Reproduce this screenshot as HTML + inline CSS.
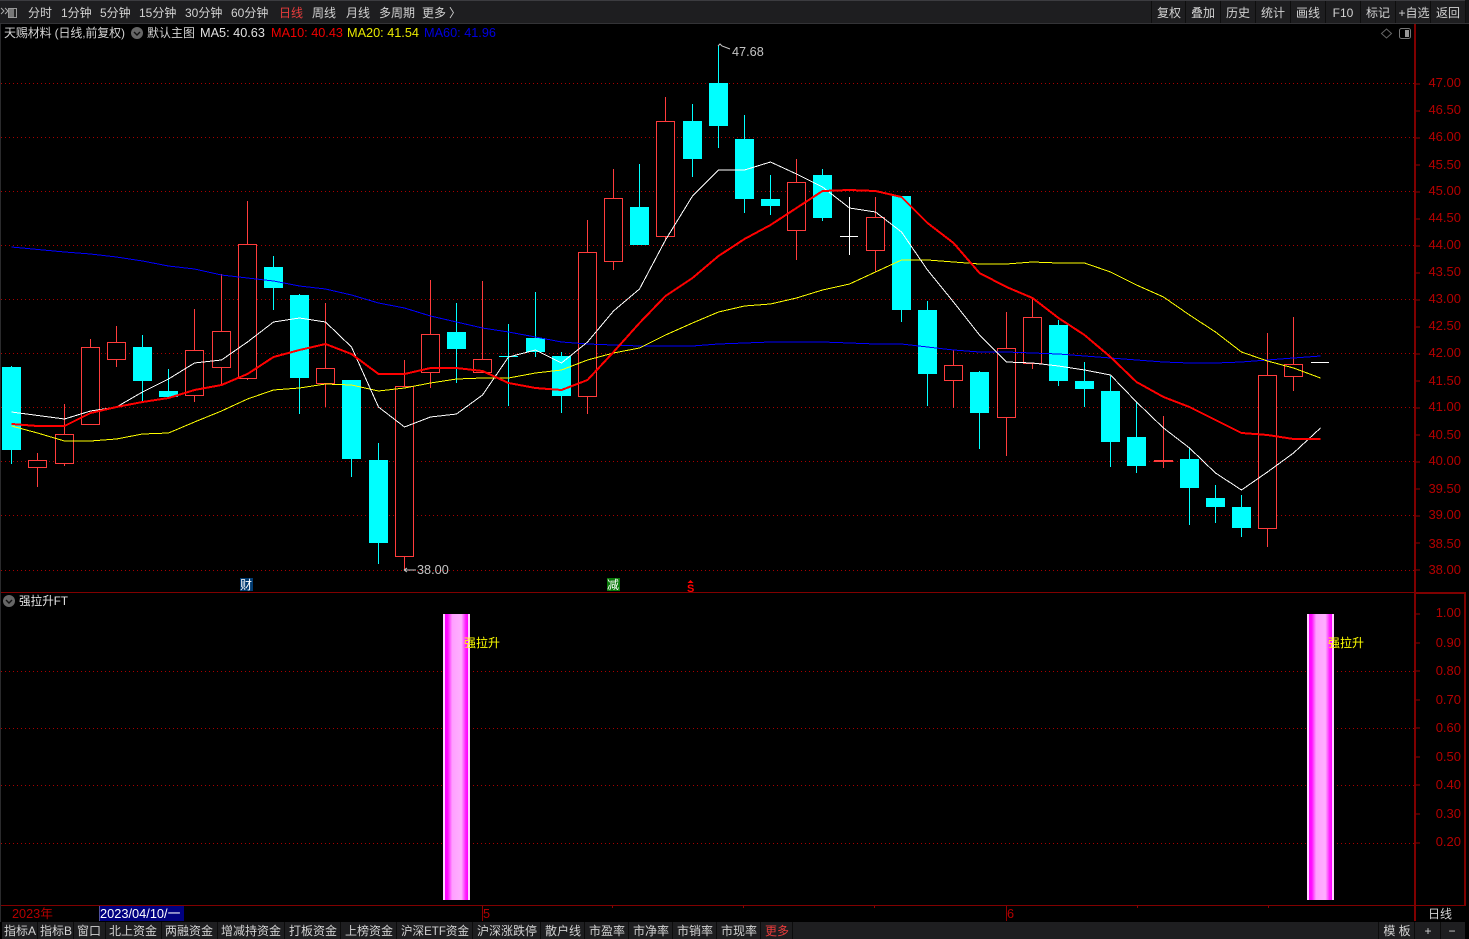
<!DOCTYPE html>
<html><head><meta charset="utf-8"><style>
html,body{margin:0;padding:0;background:#000;overflow:hidden}
svg{display:block;position:absolute;left:0;top:0}
text{font-family:"Liberation Sans","Noto Sans CJK SC",sans-serif;font-size:12px;fill:#d2d2d2}
.n{font-size:12.7px}
.p text{font-size:13px;fill:#b40000;text-anchor:end}
.t text{text-anchor:middle}
</style></head><body>
<svg width="1469" height="939" viewBox="0 0 1469 939">
<rect width="1469" height="939" fill="#000"/>
<!-- toolbar -->
<rect x="0" y="0" width="1469" height="23" fill="#1e1e20"/>
<rect x="0" y="0" width="1469" height="1" fill="#3c3c40"/>
<rect x="0" y="23" width="1469" height="1" fill="#333336"/>
<rect x="0" y="24" width="1" height="898" fill="#2a2a2c"/>
<rect x="1465" y="0" width="4" height="23" fill="#141416"/>
<path d="M1151.5 1V23M1185.5 1V23M1220.5 1V23M1255.5 1V23M1290.5 1V23M1325.5 1V23M1360.5 1V23M1395.5 1V23M1430.5 1V23M1465.5 1V23" stroke="#0e0e0e" fill="none" shape-rendering="crispEdges"/>
<path d="M1 8l3 3-3 3M5 8l3 3-3 3" stroke="#aaa" fill="none"/>
<rect x="8.5" y="8.5" width="8" height="9" fill="#222" stroke="#999"/>
<rect x="9" y="9" width="5" height="8" fill="#777"/>
<text x="28" y="17">分时</text>
<text x="61" y="17">1分钟</text>
<text x="100" y="17">5分钟</text>
<text x="139" y="17">15分钟</text>
<text x="185" y="17">30分钟</text>
<text x="231" y="17">60分钟</text>
<text x="279" y="17" style="fill:#e83c3c">日线</text>
<text x="312" y="17">周线</text>
<text x="346" y="17">月线</text>
<text x="379" y="17">多周期</text>
<text x="422" y="17">更多</text>
<text x="449" y="17">〉</text>
<g class="t">
<text x="1169" y="17">复权</text><text x="1203" y="17">叠加</text><text x="1238" y="17">历史</text><text x="1273" y="17">统计</text><text x="1308" y="17">画线</text><text x="1343" y="17">F10</text><text x="1378" y="17">标记</text><text x="1414" y="17">+自选</text><text x="1448" y="17">返回</text>
</g>
<!-- info row -->
<text x="4" y="37" textLength="121" lengthAdjust="spacing">天赐材料 (日线,前复权)</text>
<circle cx="137" cy="33" r="6" fill="#666"/>
<path d="M134 32l3 3 3-3" stroke="#111" stroke-width="1.4" fill="none"/>
<text x="147" y="37">默认主图</text>
<text class="n" x="200" y="37" style="fill:#e0e0e0">MA5: 40.63</text>
<text class="n" x="271" y="37" style="fill:#f00000">MA10: 40.43</text>
<text class="n" x="347" y="37" style="fill:#e8e800">MA20: 41.54</text>
<text class="n" x="424" y="37" style="fill:#0000e0">MA60: 41.96</text>
<path d="M1386.5 29l5 4.5-5 4.5-5-4.5z" fill="none" stroke="#666"/>
<rect x="1399.5" y="28.5" width="11" height="10" rx="2" fill="none" stroke="#777"/>
<rect x="1405" y="30" width="4" height="7" fill="#999"/>
<!-- grid -->
<path shape-rendering="crispEdges" d="M1 83.5H1415M1 137.5H1415M1 191.5H1415M1 245.5H1415M1 299.5H1415M1 353.5H1415M1 407.5H1415M1 461.5H1415M1 515.5H1415M1 570.5H1415M1 671.5H1415M1 728.5H1415M1 785.5H1415M1 843.5H1415" stroke="#a80000" stroke-dasharray="1 3" fill="none"/>
<!-- candles -->
<g shape-rendering="crispEdges">
<path stroke="#00ffff" fill="none" d="M11.5 366V464M142.5 335V401M168.5 369V392M273.5 256V310M299.5 294V414M351.5 380V477M378.5 443V564M456.5 303V383M508.5 324V406M499 356.5H518M535.5 292V357M561.5 352V413M639.5 164V207M692.5 104V177M718.5 46V148M744.5 115V213M770.5 175V215M822.5 169V221M901.5 196V322M927.5 301V406M979.5 371V449M1058.5 320V386M1084.5 362V407M1110.5 376V467M1136.5 402V473M1189.5 448V525M1215.5 485V523M1241.5 495V537"/>
<path fill="#00ffff" d="M2 367h19v83H2zM133 347h19v34H133zM159 391h19v6H159zM264 267h19v21H264zM290 295h19v83H290zM342 380h19v79H342zM369 460h19v83H369zM447 332h19v17H447zM526 338h19v14H526zM552 356h19v40H552zM630 207h19v38H630zM683 121h19v38H683zM709 83h19v43H709zM735 139h19v60H735zM761 199h19v7H761zM813 175h19v43H813zM892 196h19v114H892zM918 310h19v64H918zM970 372h19v41H970zM1049 325h19v56H1049zM1075 381h19v8H1075zM1101 391h19v51H1101zM1127 437h19v29H1127zM1180 459h19v29H1180zM1206 498h19v9H1206zM1232 507h19v21H1232z"/>
<path stroke="#ff3c3c" fill="none" d="M37.5 453V487M64.5 404V466M90.5 339V347M116.5 326V367M194.5 309V402M221.5 274V385M247.5 201V380M325.5 303V407M404.5 360V570M430.5 280V388M482.5 281V359M587.5 220V414M613.5 169V270M665.5 97V241M796.5 159V260M875.5 197V272M953.5 350V408M1006.5 312V456M1032.5 298V369M1163.5 416V468M1267.5 333V547M1293.5 317V391"/>
<rect x="1154" y="460" width="19" height="2" fill="#ff3c3c"/>
<g fill="#000" stroke="#ff3c3c">
<rect x="28.5" y="460.5" width="18" height="7"/><rect x="55.5" y="434.5" width="18" height="29"/><rect x="81.5" y="347.5" width="18" height="77"/><rect x="107.5" y="342.5" width="18" height="17"/><rect x="185.5" y="350.5" width="18" height="45"/><rect x="212.5" y="331.5" width="18" height="36"/><rect x="238.5" y="244.5" width="18" height="134"/><rect x="316.5" y="368.5" width="18" height="15"/><rect x="395.5" y="386.5" width="18" height="170"/><rect x="421.5" y="334.5" width="18" height="38"/><rect x="473.5" y="359.5" width="18" height="13"/><rect x="578.5" y="252.5" width="18" height="144"/><rect x="604.5" y="198.5" width="18" height="63"/><rect x="656.5" y="121.5" width="18" height="115"/><rect x="787.5" y="182.5" width="18" height="48"/><rect x="866.5" y="217.5" width="18" height="33"/><rect x="944.5" y="365.5" width="18" height="15"/><rect x="997.5" y="348.5" width="18" height="69"/><rect x="1023.5" y="317.5" width="18" height="46"/><rect x="1258.5" y="375.5" width="18" height="153"/><rect x="1284.5" y="364.5" width="18" height="12"/>
</g>
<path stroke="#fff" fill="none" d="M849.5 197V255M840 236.5H858M1311 362.5H1329"/>
</g>
<!-- MA lines -->
<g shape-rendering="crispEdges" fill="none">
<polyline stroke="#0000ff" points="11.5,247 64.5,252 90.5,254 116.5,257 142.5,261 168.5,266 194.5,269 221.5,275 247.5,278 273.5,281 299.5,286 325.5,289 351.5,295 378.5,303 404.5,308 430.5,316 456.5,322 482.5,328 508.5,332 535.5,337 561.5,342 587.5,344 613.5,345 639.5,346 665.5,346 692.5,346 718.5,344 744.5,343 770.5,342 796.5,342 822.5,342 849.5,343 875.5,344 901.5,344 927.5,347 953.5,350 979.5,352 1006.5,352 1032.5,353 1058.5,354 1084.5,356 1110.5,358 1136.5,360 1163.5,362 1189.5,363 1215.5,363 1241.5,362 1267.5,360 1293.5,358 1320.5,356"/>
<polyline stroke="#ffff00" points="11.5,426 37.5,433 64.5,441 90.5,441 116.5,439 142.5,434 168.5,433 194.5,422 221.5,411 247.5,399 273.5,390 299.5,388 325.5,384 351.5,385 378.5,391 404.5,388 430.5,383 456.5,379 482.5,378 508.5,378 535.5,373 561.5,370 587.5,360 613.5,353 639.5,348 665.5,335 692.5,323 718.5,312 744.5,306 770.5,304 796.5,298 822.5,290 849.5,284 875.5,272 901.5,260 927.5,260 953.5,262 979.5,264 1006.5,264 1032.5,262 1058.5,263 1084.5,263 1110.5,272 1136.5,285 1163.5,297 1189.5,315 1215.5,332 1241.5,352 1267.5,361 1293.5,368 1320.5,378"/>
<polyline stroke="#ffffff" points="11.5,412 64.5,419 90.5,411 116.5,407 142.5,392 168.5,379 194.5,363 221.5,360 247.5,342 273.5,322 299.5,318 325.5,322 351.5,347 378.5,407 404.5,427 430.5,417 456.5,414 482.5,395 508.5,357 535.5,350 561.5,363 587.5,342 613.5,311 639.5,289 665.5,240 692.5,196 718.5,170 744.5,170 770.5,162 796.5,174 822.5,187 849.5,208 875.5,212 901.5,232 927.5,270 953.5,302 979.5,335 1006.5,362 1032.5,363 1058.5,366 1084.5,370 1110.5,375 1136.5,402 1163.5,428 1189.5,448 1215.5,473 1241.5,490 1267.5,472 1293.5,453 1320.5,428"/>
<polyline stroke="#ff0000" stroke-width="2" points="11.5,424 37.5,426 64.5,426 90.5,413 116.5,407 142.5,402 168.5,398 194.5,390 221.5,385 247.5,374 273.5,357 299.5,350 325.5,344 351.5,354 378.5,374 404.5,374 430.5,368 456.5,368 482.5,371 508.5,383 535.5,388 561.5,390 587.5,380 613.5,352 639.5,323 665.5,296 692.5,278 718.5,256 744.5,239 770.5,225 796.5,208 822.5,191 849.5,190 875.5,191 901.5,197 927.5,223 953.5,243 979.5,273 1006.5,287 1032.5,298 1058.5,318 1084.5,335 1110.5,357 1136.5,382 1163.5,397 1189.5,407 1215.5,420 1241.5,433 1267.5,435 1293.5,439 1320.5,439"/>
</g>
<!-- hi/lo labels -->
<path d="M718 46l2-2 2 2 8 3" fill="none" stroke="#c8c8c8"/>
<text class="n" x="732" y="56" style="fill:#c4c4c4">47.68</text>
<path d="M404 570H416M404 570l3-2M404 570l3 2" fill="none" stroke="#c8c8c8"/>
<text class="n" x="417" y="574" style="fill:#c4c4c4">38.00</text>
<!-- markers -->
<rect x="240" y="578" width="13" height="13" fill="#003a70"/>
<text x="240" y="589" style="fill:#fff">财</text>
<rect x="607" y="578" width="13" height="13" fill="#0a7a0a"/>
<text x="607" y="589" style="fill:#fff">减</text>
<path d="M690.5 580l3 3h-6z" fill="#f00"/>
<text x="687" y="592" style="fill:#f00;font-size:11px;font-weight:bold">S</text>
<!-- axis lines -->
<g shape-rendering="crispEdges" fill="#800000">
<rect x="1414" y="24" width="2" height="897"/>
<rect x="1" y="592" width="1464" height="1"/>
<rect x="1415" y="592" width="50" height="2"/>
<rect x="1464" y="592" width="2" height="314"/>
<rect x="1" y="905" width="1465" height="1"/>
</g>
<path shape-rendering="crispEdges" fill="none" stroke="#900000" d="M1416 84H1420M1416 111H1420M1416 138H1420M1416 165H1420M1416 192H1420M1416 219H1420M1416 246H1420M1416 273H1420M1416 300H1420M1416 327H1420M1416 354H1420M1416 381H1420M1416 408H1420M1416 435H1420M1416 462H1420M1416 489H1420M1416 516H1420M1416 543H1420M1416 570H1420M1416 614H1420M1416 643H1420M1416 671H1420M1416 700H1420M1416 728H1420M1416 757H1420M1416 785H1420M1416 814H1420M1416 843H1420M612.5 906V908M743.5 906V908M874.5 906V908M1137.5 906V908M1268.5 906V908M482.5 906V921M1006.5 906V921"/>
<g class="p">
<text x="1461" y="87">47.00</text><text x="1461" y="114">46.50</text><text x="1461" y="141">46.00</text><text x="1461" y="169">45.50</text><text x="1461" y="195">45.00</text><text x="1461" y="222">44.50</text><text x="1461" y="249">44.00</text><text x="1461" y="276">43.50</text><text x="1461" y="303">43.00</text><text x="1461" y="330">42.50</text><text x="1461" y="357">42.00</text><text x="1461" y="385">41.50</text><text x="1461" y="411">41.00</text><text x="1461" y="439">40.50</text><text x="1461" y="465">40.00</text><text x="1461" y="493">39.50</text><text x="1461" y="519">39.00</text><text x="1461" y="548">38.50</text><text x="1461" y="574">38.00</text>
<text x="1461" y="617">1.00</text><text x="1461" y="647">0.90</text><text x="1461" y="675">0.80</text><text x="1461" y="704">0.70</text><text x="1461" y="732">0.60</text><text x="1461" y="761">0.50</text><text x="1461" y="789">0.40</text><text x="1461" y="818">0.30</text><text x="1461" y="846">0.20</text>
</g>
<!-- sub panel -->
<circle cx="9" cy="601" r="6" fill="#666"/>
<path d="M6 600l3 3 3-3" stroke="#111" stroke-width="1.4" fill="none"/>
<text x="19" y="605" style="fill:#e4e4e4" textLength="49" lengthAdjust="spacingAndGlyphs">强拉升FT</text>
<defs><linearGradient id="g" x1="0" x2="1" y1="0" y2="0">
<stop offset="0" stop-color="#ffd0ff"/><stop offset=".07" stop-color="#ffd0ff"/><stop offset=".08" stop-color="#ff00ff"/><stop offset=".18" stop-color="#ff10ff"/><stop offset=".34" stop-color="#ffa0ff"/><stop offset=".68" stop-color="#ffb0ff"/><stop offset=".84" stop-color="#ff20ff"/><stop offset=".92" stop-color="#ff00ff"/><stop offset=".93" stop-color="#ffd0ff"/><stop offset="1" stop-color="#ffd0ff"/>
</linearGradient></defs>
<rect x="443" y="614" width="27" height="286" fill="url(#g)"/>
<rect x="1307" y="614" width="27" height="286" fill="url(#g)"/>
<text x="464" y="647" style="fill:#ffff00">强拉升</text>
<text x="1328" y="647" style="fill:#ffff00">强拉升</text>
<!-- time axis -->
<text class="n" x="12" y="918" style="fill:#b40000">2023年</text>
<rect x="99" y="906" width="85" height="15" fill="#000080"/>
<rect x="99" y="906" width="1" height="15" fill="#5050a0"/>
<text x="100" y="918" style="fill:#fff;font-size:12.8px">2023/04/10/一</text>
<text class="n" x="483" y="918" style="fill:#b40000">5</text>
<text class="n" x="1007" y="918" style="fill:#b40000">6</text>
<text x="1428" y="918">日线</text>
<!-- tab bar -->
<rect x="2" y="922" width="1463" height="17" fill="#1e1e20"/>
<path shape-rendering="crispEdges" fill="none" stroke="#0c0c0c" d="M37.5 922V939M73.5 922V939M105.5 922V939M161.5 922V939M217.5 922V939M284.5 922V939M340.5 922V939M396.5 922V939M472.5 922V939M540.5 922V939M584.5 922V939M628.5 922V939M672.5 922V939M716.5 922V939M760.5 922V939M792.5 922V939M1378.5 922V939M1414.5 922V939M1440.5 922V939"/>
<g class="t">
<text x="20" y="935">指标A</text><text x="56" y="935">指标B</text><text x="89" y="935">窗口</text><text x="133" y="935">北上资金</text><text x="189" y="935">两融资金</text><text x="251" y="935">增减持资金</text><text x="313" y="935">打板资金</text><text x="369" y="935">上榜资金</text><text x="435" y="935" textLength="68" lengthAdjust="spacingAndGlyphs">沪深ETF资金</text><text x="507" y="935">沪深涨跌停</text><text x="563" y="935">散户线</text><text x="607" y="935">市盈率</text><text x="651" y="935">市净率</text><text x="695" y="935">市销率</text><text x="739" y="935">市现率</text><text x="777" y="935" style="fill:#e83c3c">更多</text>
<text x="1397" y="935">模 板</text><text x="1428" y="935">+</text><text x="1452" y="935">−</text>
</g>
</svg>
</body></html>
